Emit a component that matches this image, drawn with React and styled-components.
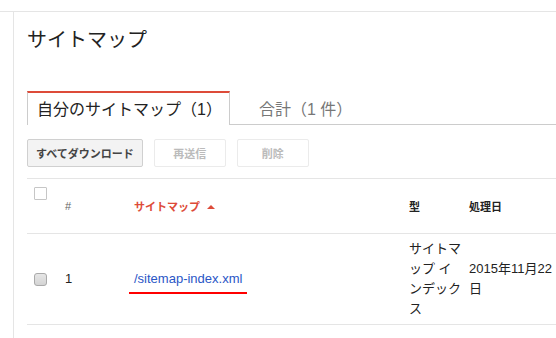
import React from "react";
import styled, { createGlobalStyle } from "styled-components";

const GlobalStyle = createGlobalStyle`
  body {
    margin: 0;
    background: #fff;
    font-family: "Liberation Sans", "Noto Sans CJK JP", sans-serif;
    color: #222;
    overflow: hidden;
  }
`;

const TopStrip = styled.div`
  height: 11px;
  border-bottom: 1px solid #e5e5e5;
`;

const Body = styled.div`
  display: flex;
  height: 326px;
`;

const Rail = styled.div`
  width: 13px;
  flex: none;
  border-right: 1px solid #e5e5e5;
`;

const Main = styled.div`
  flex: 1;
  min-width: 0;
  padding-left: 13px;
  overflow: hidden;
`;

const Title = styled.h1`
  margin: 14px 0 0;
  font-size: 20px;
  line-height: 28px;
  font-weight: normal;
  color: #222;
`;

const TabBar = styled.div`
  display: flex;
  margin-top: 37px;
  height: 34px;
`;

const Tab = styled.div`
  box-sizing: border-box;
  height: 34px;
  font-size: 16px;
  line-height: 30px;
  white-space: nowrap;
  padding: ${(p) => (p.$active ? "2px 0 0 9px" : "2px 0 0 29px")};
  color: ${(p) => (p.$active ? "#222" : "#777")};
  border-top: 2px solid ${(p) => (p.$active ? "#dd4b39" : "transparent")};
  border-left: ${(p) => (p.$active ? "1px solid #ccc" : "none")};
  border-right: ${(p) => (p.$active ? "1px solid #ccc" : "none")};
  border-bottom: ${(p) => (p.$active ? "none" : "1px solid #ccc")};
  width: ${(p) => (p.$active ? "203px" : "auto")};
  flex: ${(p) => (p.$active ? "none" : "1")};
`;

const Toolbar = styled.div`
  display: flex;
  gap: 11px;
  margin-top: 14px;
`;

const Button = styled.div`
  box-sizing: border-box;
  height: 28px;
  padding: 0 ${(p) => (p.$primary ? "8px" : "0")};
  width: ${(p) => (p.$primary ? "auto" : "72px")};
  display: flex;
  align-items: center;
  justify-content: center;
  font-size: 11px;
  font-weight: bold;
  border-radius: 2px;
  border: 1px solid ${(p) => (p.$primary ? "#d0d0d0" : "#ebebeb")};
  background: ${(p) => (p.$primary ? "#f3f3f3" : "#fff")};
  color: ${(p) => (p.$primary ? "#444" : "#bbb")};
`;

const Table = styled.table`
  margin-top: 11px;
  border-collapse: collapse;
  table-layout: fixed;
  width: 700px;
`;

const Row = styled.tr`
  border-top: 1px solid #e5e5e5;
  border-bottom: 1px solid #e5e5e5;
  height: ${(p) => p.$h}px;
`;

const Head = styled.th`
  text-align: left;
  padding: 0 0 0 7px;
  font-size: 11px;
  font-weight: bold;
  vertical-align: middle;
  color: ${(p) => p.$color || "#222"};
`;

const Cell = styled.td`
  padding: 5px 0 5px 7px;
  font-size: 13px;
  line-height: 20px;
  vertical-align: middle;
`;

const CheckHead = styled.th`
  padding: 8px 0 0 7px;
  vertical-align: top;
  text-align: left;
`;

const Box = styled.div`
  box-sizing: border-box;
  width: 13px;
  height: 13px;
  border: 1px solid ${(p) => (p.$filled ? "#aaa" : "#c6c6c6")};
  border-radius: ${(p) => (p.$filled ? "3px" : "1px")};
  background: ${(p) => (p.$filled ? "linear-gradient(#e6e6e6, #d4d4d4)" : "#fff")};
`;

const Caret = styled.span`
  display: inline-block;
  margin-left: 7px;
  width: 0;
  height: 0;
  border-left: 4px solid transparent;
  border-right: 4px solid transparent;
  border-bottom: 4px solid #dd4b39;
  vertical-align: 2px;
`;

const Link = styled.a`
  position: relative;
  color: #2a56c6;
  text-decoration: none;
  &::after {
    content: "";
    position: absolute;
    left: -5px;
    right: -5px;
    bottom: -8px;
    height: 2px;
    background: #f00;
  }
`;

const Hash = styled.span`
  color: #666;
  font-weight: normal;
`;

export default function App() {
  return (
    <>
      <GlobalStyle />
      <TopStrip />
      <Body>
        <Rail />
        <Main>
          <Title>サイトマップ</Title>
          <TabBar>
            <Tab $active>自分のサイトマップ（1）</Tab>
            <Tab>合計（1 件）</Tab>
          </TabBar>
          <Toolbar>
            <Button $primary>すべてダウンロード</Button>
            <Button>再送信</Button>
            <Button>削除</Button>
          </Toolbar>
          <Table>
            <colgroup>
              <col style={{ width: 31 }} />
              <col style={{ width: 69 }} />
              <col style={{ width: 275 }} />
              <col style={{ width: 60 }} />
              <col style={{ width: 97 }} />
              <col />
            </colgroup>
            <tbody>
              <Row $h={55}>
                <CheckHead>
                  <Box />
                </CheckHead>
                <Head>
                  <Hash>#</Hash>
                </Head>
                <Head $color="#dd4b39">
                  サイトマップ<Caret />
                </Head>
                <Head>型</Head>
                <Head>処理日</Head>
                <Head />
              </Row>
              <Row $h={91}>
                <Cell>
                  <Box $filled />
                </Cell>
                <Cell>1</Cell>
                <Cell>
                  <Link>/sitemap-index.xml</Link>
                </Cell>
                <Cell>サイトマップ インデックス</Cell>
                <Cell>2015年11月22日</Cell>
                <Cell />
              </Row>
            </tbody>
          </Table>
        </Main>
      </Body>
    </>
  );
}
